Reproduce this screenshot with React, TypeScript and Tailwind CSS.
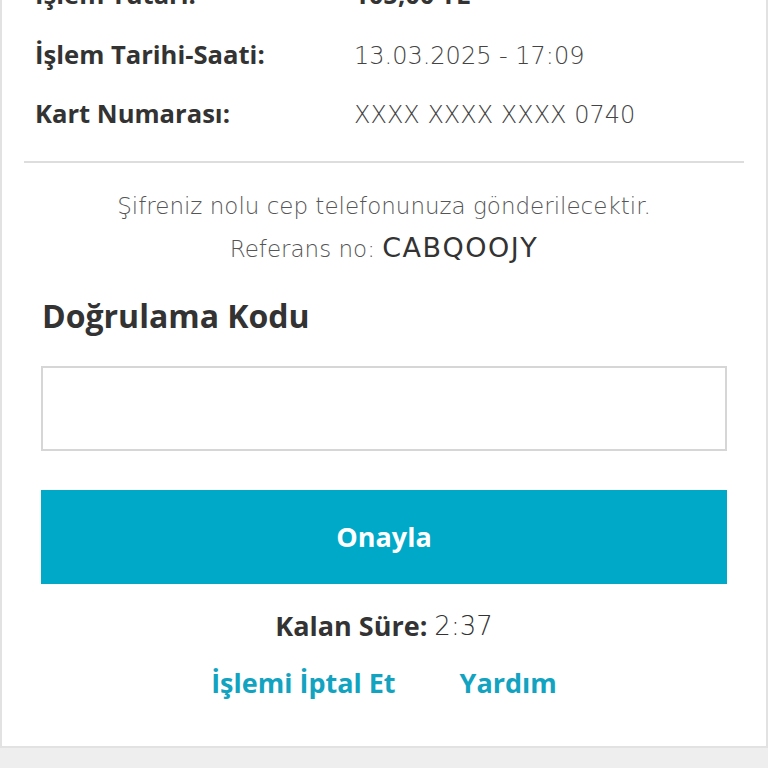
import React from 'react'

const rows = [
    { label: 'İşlem Tutarı:', value: '105,00 TL', strong: true },
    { label: 'İşlem Tarihi-Saati:', value: '13.03.2025 - 17:09', strong: false },
    { label: 'Kart Numarası:', value: 'XXXX XXXX XXXX 0740', strong: false },
]

const light = { fontFamily: '"DejaVu Sans", "Open Sans", sans-serif' }

export default function App() {
    return (
        <div
            className="h-[768px] overflow-hidden bg-[#eeeeee] text-[#333333]"
            style={{ fontFamily: '"Open Sans", Lato, sans-serif' }}
        >
            <div className="-mt-[36px] border-x-2 border-b-2 border-[#e2e2e2] bg-white pb-[45px]">
                {rows.map((row, i) => (
                    <div
                        key={row.label}
                        className={i === 0 ? 'flex h-[62px] items-start pl-[33px] pt-[12px]' : 'flex h-[59px] items-center pl-[33px]'}
                    >
                        <div className="w-[319px] text-[25.6px] font-bold">{row.label}</div>
                        {row.strong ? (
                            <div className="text-[25.6px] font-bold">{row.value}</div>
                        ) : (
                            <div className="text-[24px] font-extralight text-[#444]" style={light}>
                                {row.value}
                            </div>
                        )}
                    </div>
                ))}

                <div className="mx-[22px] mt-[17px] h-[2px] bg-[#dddddd]" />

                <div className="mt-[23px] text-center text-[23px] font-extralight leading-[41px] text-[#555]" style={light}>
                    <p>Şifreniz nolu cep telefonunuza gönderilecektir.</p>
                    <p>
                        Referans no: <span className="text-[27px] font-normal tracking-[1.5px] text-[#333]">CABQOOJY</span>
                    </p>
                </div>

                <h2 className="mt-[26px] pl-[40px] text-[32px] font-bold leading-[40px]">Doğrulama Kodu</h2>

                <div className="px-[39px]">
                    <input
                        type="text"
                        className="mt-[30px] block h-[85px] w-full border-2 border-[#d6d6d6] bg-white px-4 text-[24px] outline-none"
                    />
                    <button
                        type="button"
                        className="mt-[39px] flex h-[94px] w-full items-center justify-center bg-[#00a9c7] text-[27px] font-bold text-white"
                    >
                        Onayla
                    </button>
                </div>

                <div className="mt-[24px] flex h-[36px] items-center justify-center gap-[7px]">
                    <span className="text-[27px] font-bold">Kalan Süre:</span>
                    <span className="text-[26px] font-extralight" style={light}>
                        2:37
                    </span>
                </div>

                <div className="mt-[21px] flex h-[36px] items-center justify-center gap-[64px] text-[27px] font-bold text-[#12a3c1]">
                    <a href="#">İşlemi İptal Et</a>
                    <a href="#">Yardım</a>
                </div>
            </div>
        </div>
    )
}
